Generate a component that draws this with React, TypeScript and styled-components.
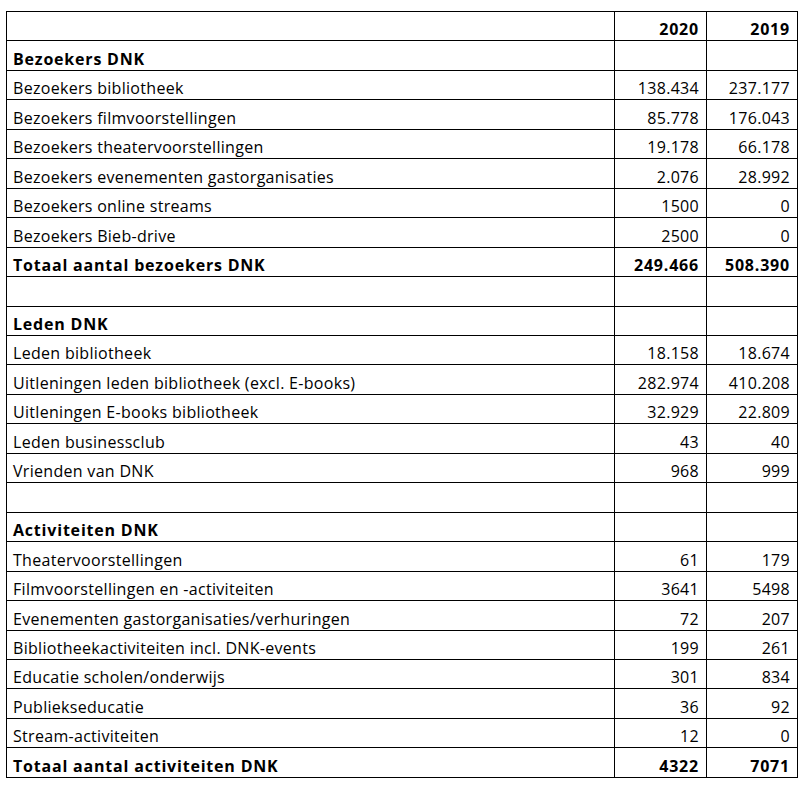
import styled, { createGlobalStyle } from "styled-components";

const GlobalStyle = createGlobalStyle`
  body {
    margin: 0;
    background: #ffffff;
    font-family: "Open Sans", Lato, sans-serif;
  }
`;

type Row = {
  label: string;
  a?: string;
  b?: string;
  bold?: boolean;
};

const rows: Row[] = [
  { label: "", a: "2020", b: "2019", bold: true },
  { label: "Bezoekers DNK", bold: true },
  { label: "Bezoekers bibliotheek", a: "138.434", b: "237.177" },
  { label: "Bezoekers filmvoorstellingen", a: "85.778", b: "176.043" },
  { label: "Bezoekers theatervoorstellingen", a: "19.178", b: "66.178" },
  { label: "Bezoekers evenementen gastorganisaties", a: "2.076", b: "28.992" },
  { label: "Bezoekers online streams", a: "1500", b: "0" },
  { label: "Bezoekers Bieb-drive", a: "2500", b: "0" },
  { label: "Totaal aantal bezoekers DNK", a: "249.466", b: "508.390", bold: true },
  { label: "" },
  { label: "Leden DNK", bold: true },
  { label: "Leden bibliotheek", a: "18.158", b: "18.674" },
  { label: "Uitleningen leden bibliotheek (excl. E-books)", a: "282.974", b: "410.208" },
  { label: "Uitleningen E-books bibliotheek", a: "32.929", b: "22.809" },
  { label: "Leden businessclub", a: "43", b: "40" },
  { label: "Vrienden van DNK", a: "968", b: "999" },
  { label: "" },
  { label: "Activiteiten DNK", bold: true },
  { label: "Theatervoorstellingen", a: "61", b: "179" },
  { label: "Filmvoorstellingen en -activiteiten", a: "3641", b: "5498" },
  { label: "Evenementen gastorganisaties/verhuringen", a: "72", b: "207" },
  { label: "Bibliotheekactiviteiten incl. DNK-events", a: "199", b: "261" },
  { label: "Educatie scholen/onderwijs", a: "301", b: "834" },
  { label: "Publiekseducatie", a: "36", b: "92" },
  { label: "Stream-activiteiten", a: "12", b: "0" },
  { label: "Totaal aantal activiteiten DNK", a: "4322", b: "7071", bold: true },
];

const Page = styled.div`
  padding: 11px 0 0 6px;
`;

const Table = styled.table`
  border-collapse: collapse;
  table-layout: fixed;
  width: 791px;
`;

const Col = styled.col<{ $w: number }>`
  width: ${(p) => p.$w}px;
`;

const Cell = styled.td<{ $bold?: boolean; $num?: boolean }>`
  border: 1px solid #000;
  height: 29.46px;
  padding: 0 7px 0 6px;
  vertical-align: bottom;
  text-align: ${(p) => (p.$num ? "right" : "left")};
  font-size: 16px;
  line-height: 22px;
  font-weight: ${(p) => (p.$bold ? 700 : 400)};
  letter-spacing: ${(p) => (p.$bold ? "0.8px" : "0.3px")};
  color: #000;
  white-space: nowrap;
  box-sizing: border-box;
`;

export default function App() {
  return (
    <>
      <GlobalStyle />
      <Page>
        <Table>
          <colgroup>
            <Col $w={608} />
            <Col $w={92} />
            <Col $w={91} />
          </colgroup>
          <tbody>
            {rows.map((r, i) => (
              <tr key={i}>
                <Cell $bold={r.bold}>{r.label}</Cell>
                <Cell $bold={r.bold} $num>
                  {r.a}
                </Cell>
                <Cell $bold={r.bold} $num>
                  {r.b}
                </Cell>
              </tr>
            ))}
          </tbody>
        </Table>
      </Page>
    </>
  );
}
